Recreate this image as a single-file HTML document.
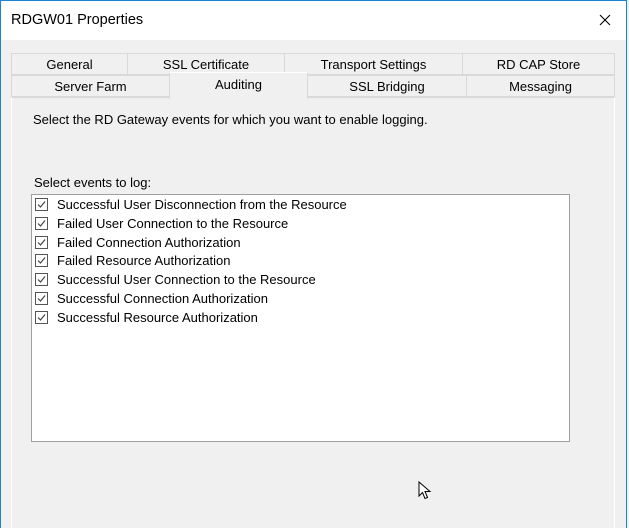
<!DOCTYPE html>
<html><head><style>
html,body{margin:0;width:629px;height:528px;overflow:hidden}
body{background:#f0f0f0;font-family:"Liberation Sans",sans-serif;font-size:13px;color:#000;position:relative}
.win{position:absolute;left:0;top:0;width:627px;height:528px;border-left:1px solid #1883d7;border-top:1px solid #1883d7;border-right:1px solid #1883d7;box-sizing:border-box;background:#f0f0f0;overflow:hidden}
.title{position:absolute;left:0;top:0;right:0;height:39px;background:#fff}
.title span{position:absolute;left:10px;top:11px;font-size:14.5px}
.x{position:absolute;left:598px;top:13px}
.tab{position:absolute;height:22px;border:1px solid #d9d9d9;background:#f0f0f0;box-sizing:border-box;text-align:center;line-height:21px;font-size:13px}
.panel{position:absolute;left:10px;top:96px;width:604px;height:432px;background:#f0f0f0;border:1px solid #d9d9d9;border-right-color:#fff;border-left-color:#fff;border-bottom:none;box-sizing:border-box}
.list{position:absolute;left:30px;top:193px;width:539px;height:248px;background:#fff;border:1px solid #a0a0a0;box-sizing:border-box}
.item{height:18.8px;position:relative;padding-left:25px;line-height:19px}
.cb{position:absolute;left:3px;top:3px;width:11px;height:11px;border:1px solid #555;background:#fff}
.cb svg{position:absolute;left:0;top:0}
</style></head><body>
<div class="win">
<div class="title"><span>RDGW01 Properties</span><svg class="x" width="12" height="12"><path d="M1 1 L11 11 M11 1 L1 11" stroke="#000" stroke-width="1.1"/></svg></div>
<div class="tab" style="left:10px;top:52px;width:117px">General</div>
<div class="tab" style="left:126px;top:52px;width:158px">SSL Certificate</div>
<div class="tab" style="left:283px;top:52px;width:179px">Transport Settings</div>
<div class="tab" style="left:461px;top:52px;width:153px">RD CAP Store</div>
<div class="tab" style="left:10px;top:74px;width:159px">Server Farm</div>
<div class="tab" style="left:306px;top:74px;width:160px">SSL Bridging</div>
<div class="tab" style="left:465px;top:74px;width:149px">Messaging</div>
<div class="panel"></div>
<div class="tab" style="left:168px;top:71px;width:139px;height:27px;background:#f0f0f0;border-bottom:none;border-top-color:#fff;line-height:24px">Auditing</div>
<div style="position:absolute;left:32px;top:111px">Select the RD Gateway events for which you want to enable logging.</div>
<div style="position:absolute;left:33px;top:174px">Select events to log:</div>
<div class="list"><div style="padding-top:0">
<div class="item"><div class="cb"><svg width="11" height="11"><path d="M2 5.5 L4.5 8 L9 2.5" stroke="#444" stroke-width="1.2" fill="none"/></svg></div>Successful User Disconnection from the Resource</div>
<div class="item"><div class="cb"><svg width="11" height="11"><path d="M2 5.5 L4.5 8 L9 2.5" stroke="#444" stroke-width="1.2" fill="none"/></svg></div>Failed User Connection to the Resource</div>
<div class="item"><div class="cb"><svg width="11" height="11"><path d="M2 5.5 L4.5 8 L9 2.5" stroke="#444" stroke-width="1.2" fill="none"/></svg></div>Failed Connection Authorization</div>
<div class="item"><div class="cb"><svg width="11" height="11"><path d="M2 5.5 L4.5 8 L9 2.5" stroke="#444" stroke-width="1.2" fill="none"/></svg></div>Failed Resource Authorization</div>
<div class="item"><div class="cb"><svg width="11" height="11"><path d="M2 5.5 L4.5 8 L9 2.5" stroke="#444" stroke-width="1.2" fill="none"/></svg></div>Successful User Connection to the Resource</div>
<div class="item"><div class="cb"><svg width="11" height="11"><path d="M2 5.5 L4.5 8 L9 2.5" stroke="#444" stroke-width="1.2" fill="none"/></svg></div>Successful Connection Authorization</div>
<div class="item"><div class="cb"><svg width="11" height="11"><path d="M2 5.5 L4.5 8 L9 2.5" stroke="#444" stroke-width="1.2" fill="none"/></svg></div>Successful Resource Authorization</div>
</div></div>
<svg style="position:absolute;left:417px;top:480px" width="14" height="20"><path d="M1 1 L1 15 L4.5 11.5 L7 17.5 L9.5 16.5 L7 10.5 L12 10.5 Z" fill="#fff" stroke="#000" stroke-width="1"/></svg>
</div>
</body></html>
